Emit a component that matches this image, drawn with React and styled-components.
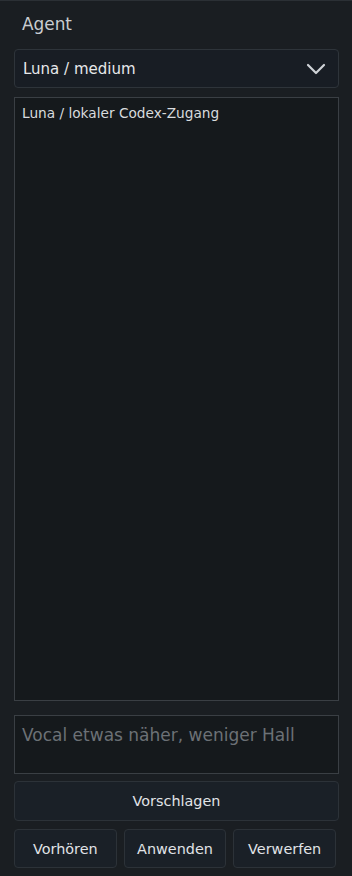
import React from "react";
import styled, { createGlobalStyle } from "styled-components";

const Global = createGlobalStyle`
  html, body { margin: 0; padding: 0; background: #1a1e22; }
  body { font-family: "DejaVu Sans", Verdana, sans-serif; }
  * { box-sizing: border-box; }
`;

const Panel = styled.div`
  width: 352px;
  height: 876px;
  background: #1a1e22;
  border-top: 1px solid #2b3035;
  padding: 11px 13px 8px 14px;
  display: flex;
  flex-direction: column;
`;

const Label = styled.div`
  color: #c9cdd1;
  font-size: 16.9px;
  line-height: 24px;
  padding-left: 8px;
  margin-bottom: 13px;
`;

const Select = styled.div`
  height: 39px;
  border: 1px solid #2e343a;
  border-radius: 4px;
  background: #181d24;
  display: flex;
  align-items: center;
  justify-content: space-between;
  padding: 0 12px 0 8px;
  color: #e6e8ea;
  font-size: 15px;
  margin-bottom: 9px;
`;

const Log = styled.div`
  height: 604px;
  border: 1px solid #3a3f44;
  background: #15191c;
  color: #d8dbde;
  font-size: 13.7px;
  line-height: 20px;
  padding: 5px 7px;
  margin-bottom: 14px;
`;

const Input = styled.div`
  height: 59px;
  border: 1px solid #3a3f44;
  background: #15191c;
  color: #6c7176;
  font-size: 17px;
  line-height: 24px;
  padding: 7px 7px;
  margin-bottom: 7px;
`;

const Button = styled.div`
  height: ${(p) => (p.$tall ? 40 : 39)}px;
  border: 1px solid #2c3238;
  border-radius: 4px;
  background: #1a2027;
  color: #e1e4e7;
  font-size: 14.4px;
  display: flex;
  align-items: center;
  justify-content: center;
`;

const Row = styled.div`
  display: grid;
  grid-template-columns: repeat(3, 1fr);
  gap: 7px;
  width: 322px;
  margin-top: 8px;
`;

const Chevron = () => (
  <svg width="20" height="12" viewBox="0 0 20 12" fill="none">
    <path d="M2 2 L10 10 L18 2" stroke="#cfd3d7" strokeWidth="2.2" strokeLinecap="round" strokeLinejoin="round" />
  </svg>
);

export default function App() {
  return (
    <>
      <Global />
      <Panel>
        <Label>Agent</Label>
        <Select>
          <span>Luna / medium</span>
          <Chevron />
        </Select>
        <Log>Luna / lokaler Codex-Zugang</Log>
        <Input>Vocal etwas näher, weniger Hall</Input>
        <Button $tall>Vorschlagen</Button>
        <Row>
          <Button>Vorhören</Button>
          <Button>Anwenden</Button>
          <Button>Verwerfen</Button>
        </Row>
      </Panel>
    </>
  );
}
